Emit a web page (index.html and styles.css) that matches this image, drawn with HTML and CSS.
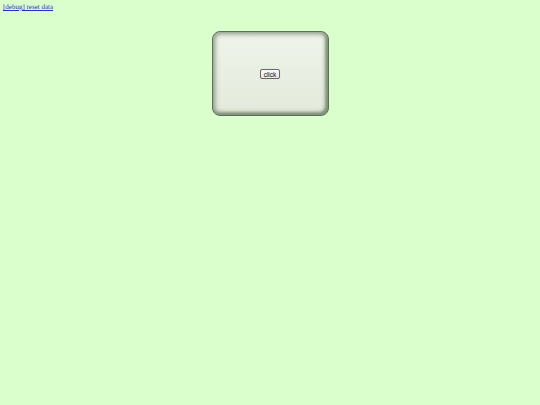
FILE: index.html
```html
<!DOCTYPE html>
<html>
<head>
<meta charset="utf-8">
<link rel="stylesheet" href="styles.css">
</head>
<body>
<div class="top"><a href="#" class="debug">[debug] reset data</a></div>
<div class="stage">
  <div class="panel">
    <button class="btn">click</button>
  </div>
</div>
</body>
</html>
```

FILE: styles.css
```css
html, body {
  margin: 0;
  padding: 0;
  background: #dbffcc;
}
body {
  font-family: "Liberation Serif", "Times New Roman", serif;
  width: 540px;
  height: 405px;
}
.top {
  padding: 4px 0 0 3px;
  font-size: 7px;
  line-height: 7px;
  height: 9px;
  text-rendering: geometricPrecision;
}
.debug {
  color: #2a2ad0;
  text-decoration: underline;
}
.stage {
  display: flex;
  justify-content: center;
  padding-top: 18px;
}
.panel {
  width: 117px;
  height: 85px;
  box-sizing: border-box;
  border-radius: 8px;
  background: linear-gradient(#eef4ea, #e3eadb);
  border: 1px solid #5f6e5a;
  box-shadow: inset 0 0 5px 2px #889882, inset -2px -2px 3px #6a7a63;
  display: flex;
  align-items: center;
  justify-content: center;
}
.btn {
  font-family: "Liberation Sans", Arial, sans-serif;
  font-size: 6.5px;
  line-height: 7px;
  padding: 0 3px;
  height: 10px;
  border: 1px solid #6a6a6a;
  border-radius: 2px;
  background: linear-gradient(#fafafa, #e4e4e4);
  color: #111;
  margin-top: 1px;
  box-shadow: 0 0 1px rgba(0,0,0,0.2);
}
```
